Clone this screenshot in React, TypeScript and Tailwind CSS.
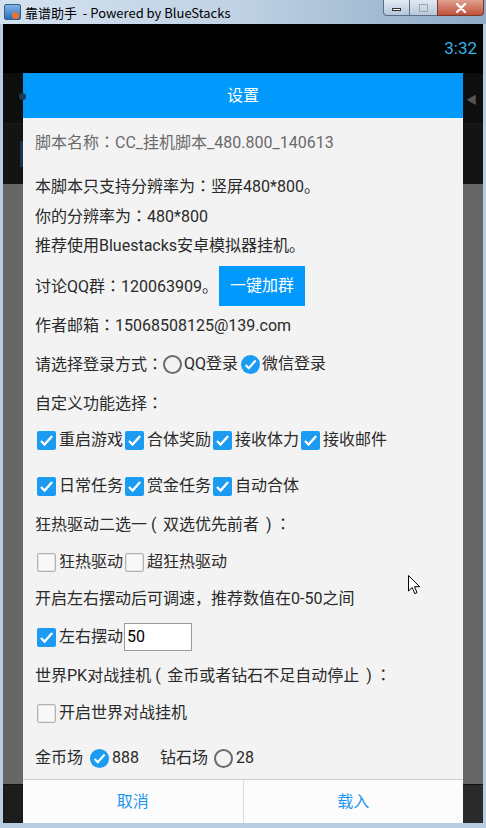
import type { ReactNode } from "react";

const font = "font-['Roboto','Noto_Sans_CJK_SC',sans-serif]";

// fullwidth colon, centred like the Android font
function C() {
  return <span className="font-['Noto_Sans_CJK_JP',sans-serif]">：</span>;
}

// fullwidth parens drawn the way the Android fallback font places them
function P({ close }: { close?: boolean }) {
  return (
    <span className={`inline-block w-[16px] ${close ? "pl-[7px]" : "pl-[4px]"}`}>{close ? ")" : "("}</span>
  );
}

function Check({ size = 19 }: { size?: number }) {
  return (
    <svg viewBox="0 0 19 19" width={size} height={size}>
      <path d="M4 10l3.6 3.6L15.2 5" fill="none" stroke="#fff" strokeWidth="2.3" />
    </svg>
  );
}

function Box({ checked }: { checked?: boolean }) {
  if (checked) {
    return (
      <span className="flex h-[19px] w-[19px] shrink-0 items-center justify-center rounded-[2px] bg-[#1b9cf2]">
        <Check />
      </span>
    );
  }
  return (
    <span className="block h-[19px] w-[19px] shrink-0 rounded-[2px] border border-[#b3b3b3] bg-[#f8f8f8] shadow-[inset_0_0_0_1px_#e4e4e4]" />
  );
}

function Radio({ checked }: { checked?: boolean }) {
  if (checked) {
    return (
      <span className="flex h-[19px] w-[19px] shrink-0 items-center justify-center rounded-full bg-[#1b9cf2]">
        <Check size={17} />
      </span>
    );
  }
  return <span className="block h-[19px] w-[19px] shrink-0 rounded-full border-2 border-[#6b6b6b]" />;
}

function Item({ checked, children }: { checked?: boolean; children: ReactNode }) {
  return (
    <span className="flex items-center gap-[3px]">
      <Box checked={checked} />
      <span>{children}</span>
    </span>
  );
}

function Row({ mt, children, h = "h-[30px]" }: { mt: string; children: ReactNode; h?: string }) {
  return <div className={`flex items-center ${h} ${mt}`}>{children}</div>;
}

function Strip({ side }: { side: "left" | "right" }) {
  const bottom = side === "left" ? "bg-[#1c1c1c]" : "bg-[#2a2a2a]";
  return (
    <div className="flex w-[20px] flex-col">
      <div className="relative h-[50px] bg-[#0e0e0e]">
        {side === "left" ? (
          <span className="absolute left-[16px] top-[20px] h-[7px] w-[7px] rounded-full bg-[#1d3b55]" />
        ) : (
          <span className="absolute left-[3px] top-[22px] text-[11px] leading-none text-[#555]">◀</span>
        )}
      </div>
      <div className="relative h-[61px] border-t border-[#1b1b1b] bg-[#141414]">
        {side === "left" && <span className="absolute left-[17px] top-[17px] h-[26px] w-[3px] bg-[#1b3550]" />}
      </div>
      <div className="h-[600px] bg-[#666666]" />
      <div className={`flex-1 border-t border-[#111] ${bottom}`} />
    </div>
  );
}

export default function App() {
  return (
    <div className="relative flex h-[828px] w-[486px] flex-col overflow-hidden bg-[#b9cde2]">
      {/* window title bar */}
      <div className="relative flex h-[24px] items-center bg-gradient-to-r from-[#d4e2f0] via-[#bfd1e3] to-[#8eaac6] pl-[4px]">
        <span className="flex h-[16px] w-[17px] items-center justify-center rounded-[2px] border border-[#3a5d86] bg-gradient-to-b from-[#7fb4e6] to-[#2a6fb4]">
          <span className="ml-[6px] mt-[6px] h-[7px] w-[7px] rounded-full bg-[#e8743a]" />
        </span>
        <span className="ml-[4px] font-['Noto_Sans_CJK_SC',sans-serif] text-[13px] leading-none text-black">
          靠谱助手&nbsp; - Powered by BlueStacks
        </span>
        <div className="absolute right-[2px] top-0 flex h-[16px]">
          <span className="flex w-[27px] items-center justify-center rounded-bl-[4px] border border-t-0 border-[#5b6f88] bg-gradient-to-b from-[#e4edf6] to-[#b3c6da]">
            <span className="mt-[4px] h-[3px] w-[9px] border border-[#333] bg-white" />
          </span>
          <span className="flex w-[27px] items-center justify-center border-b border-[#5b6f88] bg-gradient-to-b from-[#dfe8f1] to-[#b9c9da]">
            <span className="h-[8px] w-[9px] border border-[#9aa7b5]" />
          </span>
          <span className="flex w-[47px] items-center justify-center rounded-br-[4px] border border-t-0 border-[#7a3a30] bg-gradient-to-b from-[#e0a08f] to-[#c0503a]">
            <svg width="12" height="10" viewBox="0 0 12 10">
              <path d="M2 1l8 8M10 1l-8 8" stroke="#fff" strokeWidth="2.4" strokeLinecap="round" />
            </svg>
          </span>
        </div>
      </div>

      {/* window body */}
      <div className="flex flex-1 px-[3px] pb-[5px]">
        <div className={`flex w-[480px] flex-col bg-black ${font}`}>
          <div className="flex h-[49px] items-center justify-end pr-[6px] text-[17px] text-[#33b5e5]">3:32</div>

          <div className="flex flex-1">
            <Strip side="left" />

            <div className="flex w-[440px] flex-col bg-[#f3f3f3]">
              <div className="flex h-[45px] items-center justify-center bg-[#0299fd] text-[16px] text-white">设置</div>

              <div className="flex flex-1 flex-col px-[12px] text-[16px] text-[#2a2a2a]">
                <Row mt="mt-[9px]">
                  <span className="text-[#6a6a6a]">
                    脚本名称<C />CC_挂机脚本_480.800_140613
                  </span>
                </Row>
                <Row mt="mt-[14px]">
                  <span>
                    本脚本只支持分辨率为<C />竖屏480*800。
                  </span>
                </Row>
                <Row mt="mt-0">
                  <span>
                    你的分辨率为<C />480*800
                  </span>
                </Row>
                <Row mt="mt-0">推荐使用Bluestacks安卓模拟器挂机。</Row>
                <Row mt="mt-[5px]" h="h-[40px]">
                  <span>
                    讨论QQ群<C />120063909。
                  </span>
                  <span className="ml-[1px] flex h-[40px] w-[86px] items-center justify-center bg-[#0299fd] text-white">
                    一键加群
                  </span>
                </Row>
                <Row mt="mt-[4px]">
                  <span>
                    作者邮箱<C />15068508125@139.com
                  </span>
                </Row>
                <Row mt="mt-[9px]">
                  <span>
                    请选择登录方式<C />
                  </span>
                  <Radio />
                  <span className="ml-[2px]">QQ登录</span>
                  <span className="ml-[3px]">
                    <Radio checked />
                  </span>
                  <span className="ml-[2px]">微信登录</span>
                </Row>
                <Row mt="mt-[9px]">
                  <span>
                    自定义功能选择<C />
                  </span>
                </Row>
                <Row mt="mt-[7px]">
                  <div className="ml-[2px] flex gap-[2px]">
                    <Item checked>重启游戏</Item>
                    <Item checked>合体奖励</Item>
                    <Item checked>接收体力</Item>
                    <Item checked>接收邮件</Item>
                  </div>
                </Row>
                <Row mt="mt-[16px]">
                  <div className="ml-[2px] flex gap-[2px]">
                    <Item checked>日常任务</Item>
                    <Item checked>赏金任务</Item>
                    <Item checked>自动合体</Item>
                  </div>
                </Row>
                <Row mt="mt-[8px]">
                  <span>
                    狂热驱动二选一<P />双选优先前者<P close />
                    <C />
                  </span>
                </Row>
                <Row mt="mt-[8px]">
                  <div className="ml-[2px] flex gap-[2px]">
                    <Item>狂热驱动</Item>
                    <Item>超狂热驱动</Item>
                  </div>
                </Row>
                <Row mt="mt-[7px]">开启左右摆动后可调速，推荐数值在0-50之间</Row>
                <Row mt="mt-[8px]">
                  <div className="ml-[2px] flex items-center gap-[1px]">
                    <Item checked>左右摆动</Item>
                    <span className="flex h-[28px] w-[68px] items-center border border-[#9a9a9a] bg-white pl-[2px] text-[16px] text-black">
                      50
                    </span>
                  </div>
                </Row>
                <Row mt="mt-[8px]">
                  <span>
                    世界PK对战挂机<P />金币或者钻石不足自动停止<P close />
                    <C />
                  </span>
                </Row>
                <Row mt="mt-[8px]">
                  <div className="ml-[2px] flex">
                    <Item>开启世界对战挂机</Item>
                  </div>
                </Row>
                <Row mt="mt-[15px]">
                  <span>金币场</span>
                  <span className="ml-[7px]">
                    <Radio checked />
                  </span>
                  <span className="ml-[3px]">888</span>
                  <span className="ml-[21px]">钻石场</span>
                  <span className="ml-[6px]">
                    <Radio />
                  </span>
                  <span className="ml-[3px]">28</span>
                </Row>
              </div>

              <div className="flex h-[44px] border-t border-[#cfcfcf] bg-[#fcfcfc] text-[16px] text-[#1d97f0]">
                <div className="flex flex-1 items-center justify-center border-r border-[#dcdcdc]">取消</div>
                <div className="flex flex-1 items-center justify-center">载入</div>
              </div>
            </div>

            <Strip side="right" />
          </div>
        </div>
      </div>

      {/* mouse pointer */}
      <svg className="absolute left-[408px] top-[575px]" width="13" height="20" viewBox="0 0 13 20">
        <path
          d="M0.5 0.5 L0.5 16 L4.2 12.5 L6.8 18.6 L9 17.6 L6.5 11.7 L11.6 11.7 Z"
          fill="#fff"
          stroke="#000"
          strokeWidth="1"
          strokeLinejoin="round"
        />
      </svg>
    </div>
  );
}
